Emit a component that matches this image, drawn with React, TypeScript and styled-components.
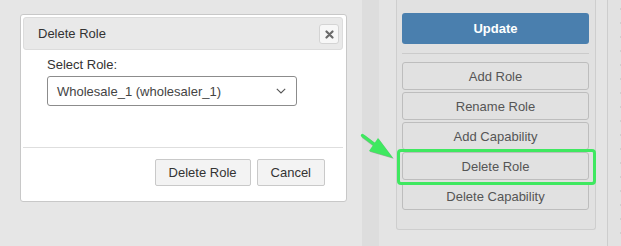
import React from "react";
import styled, { createGlobalStyle } from "styled-components";

const Global = createGlobalStyle`
  html, body { margin: 0; padding: 0; background: #e6e6e6; }
  body { font-family: "Liberation Sans", Arial, sans-serif; font-size: 13px; color: #333; }
  * { box-sizing: border-box; }
`;

const Page = styled.div`
  display: flex;
  width: 621px;
  height: 246px;
  overflow: hidden;
  background: #e6e6e6;
`;

const LeftArea = styled.div`
  width: 362px;
  padding: 14px 0 0 20px;
  flex: none;
`;

const Dialog = styled.div`
  width: 327px;
  height: 188px;
  background: #fff;
  border: 1px solid #c8c8c8;
  border-radius: 3px;
  padding: 2px 3px 0 2px;
  display: flex;
  flex-direction: column;
`;

const Header = styled.div`
  height: 33px;
  background: #e9e9e9;
  border: 1px solid #dcdcdc;
  border-radius: 3px;
  display: flex;
  align-items: center;
  justify-content: space-between;
  padding: 0 3px 0 14px;
`;

const Title = styled.div`
  font-size: 13px;
  color: #333;
  font-weight: 500;
`;

const CloseBtn = styled.button`
  width: 20px;
  height: 20px;
  padding: 0;
  background: #f7f7f7;
  border: 1px solid #d4d4d4;
  border-radius: 3px;
  display: flex;
  align-items: center;
  justify-content: center;
  margin-top: 1px;
`;

const Body = styled.div`
  padding: 6px 0 0 24px;
  height: 98px;
  border-bottom: 1px solid #dedede;
  display: flex;
  flex-direction: column;
`;

const Label = styled.label`
  font-size: 13px;
  color: #333;
  line-height: 16px;
  margin-bottom: 3px;
  margin-top: 1px;
`;

const SelectBox = styled.div`
  width: 250px;
  height: 30px;
  border: 1px solid #8c8c8c;
  border-radius: 3px;
  display: flex;
  align-items: center;
  justify-content: space-between;
  padding: 0 10px 0 9px;
  font-size: 13px;
  color: #444;
`;

const Footer = styled.div`
  display: flex;
  justify-content: flex-end;
  gap: 6px;
  padding: 11px 18px 0 0;
`;

const DlgButton = styled.button`
  height: 27px;
  padding: 0 13px;
  font-family: "Liberation Sans", Arial, sans-serif;
  font-size: 13px;
  color: #333;
  background: #f3f3f3;
  border: 1px solid #c9c9c9;
  border-radius: 2px;
`;

const Strip = styled.div`
  width: 17px;
  flex: none;
  background: #dddddd;
`;

const Column = styled.div`
  width: 229px;
  flex: none;
  background: #e4e4e4;
  border-right: 1px solid #cdcdcd;
  padding-left: 17px;
  position: relative;
`;

const Panel = styled.div`
  width: 200px;
  height: 230px;
  background: #e1e1e1;
  border: 1px solid #cecece;
  border-top: none;
  border-radius: 0 0 3px 3px;
  padding: 13px 6px 0 5px;
  display: flex;
  flex-direction: column;
`;

const UpdateBtn = styled.button`
  height: 31px;
  background: #4a7fae;
  color: #fff;
  border: none;
  border-radius: 3px;
  font-family: "Liberation Sans", Arial, sans-serif;
  font-size: 13px;
  font-weight: bold;
`;

const Sep = styled.div`
  height: 1px;
  background: #cbcbcb;
  margin: 9px 0 8px;
`;

const SideList = styled.div`
  display: flex;
  flex-direction: column;
  gap: 2px;
`;

const SideBtn = styled.button`
  height: 28px;
  background: #e1e1e1;
  border: 1px solid #bdbdbd;
  border-radius: 3px;
  color: #555;
  font-family: "Liberation Sans", Arial, sans-serif;
  font-size: 13px;
  padding: 0;
`;

const Highlight = styled.div`
  position: absolute;
  left: 18px;
  top: 149px;
  width: 199px;
  height: 36px;
  border: 3px solid #3fe860;
  border-radius: 4px;
  pointer-events: none;
`;

const Arrow = styled.svg`
  position: absolute;
  left: -20px;
  top: 130px;
  overflow: visible;
`;

const Texture = styled.div`
  flex: 1;
  background-color: #e2e2e2;
  background-image: radial-gradient(#cfcfcf 0.6px, transparent 0.8px);
  background-size: 13px 14px;
  background-position: 6px 2px;
`;

export default function App() {
  return (
    <>
      <Global />
      <Page>
        <LeftArea>
          <Dialog>
            <Header>
              <Title>Delete Role</Title>
              <CloseBtn aria-label="close">
                <svg width="9" height="9" viewBox="0 0 9 9">
                  <path d="M1.5 1.5 L7.5 7.5 M7.5 1.5 L1.5 7.5" stroke="#6a6a6a" strokeWidth="2.2" strokeLinecap="round" />
                </svg>
              </CloseBtn>
            </Header>
            <Body>
              <Label>Select Role:</Label>
              <SelectBox>
                <span>Wholesale_1 (wholesaler_1)</span>
                <svg width="10" height="6" viewBox="0 0 10 6">
                  <path d="M0.8 0.8 L5 5 L9.2 0.8" fill="none" stroke="#555" strokeWidth="1.1" />
                </svg>
              </SelectBox>
            </Body>
            <Footer>
              <DlgButton>Delete Role</DlgButton>
              <DlgButton>Cancel</DlgButton>
            </Footer>
          </Dialog>
        </LeftArea>
        <Strip />
        <Column>
          <Panel>
            <UpdateBtn>Update</UpdateBtn>
            <Sep />
            <SideList>
              <SideBtn>Add Role</SideBtn>
              <SideBtn>Rename Role</SideBtn>
              <SideBtn>Add Capability</SideBtn>
              <SideBtn>Delete Role</SideBtn>
              <SideBtn>Delete Capability</SideBtn>
            </SideList>
          </Panel>
          <Highlight />
          <Arrow width="40" height="32" viewBox="0 0 40 32">
            <path d="M4 6 L16 15" stroke="#6a7a6a" strokeWidth="3.6" strokeLinecap="round" opacity="0.5" transform="translate(0.7,0.8)" />
            <path d="M3.5 5.5 L15.5 14.5" stroke="#3fe860" strokeWidth="3.4" strokeLinecap="round" />
            <polygon points="19,8 34,28 10,21" fill="#5a6a5a" opacity="0.5" transform="translate(0.7,0.8)" />
            <polygon points="19,8 34,28 10,21" fill="#3fe860" />
          </Arrow>
        </Column>
        <Texture />
      </Page>
    </>
  );
}
